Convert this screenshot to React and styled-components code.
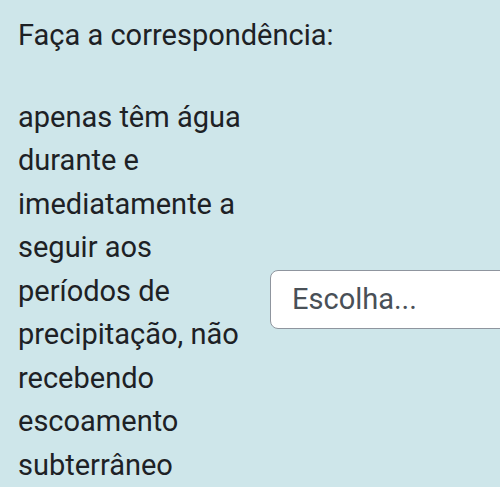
import React from "react";
import styled, { createGlobalStyle } from "styled-components";

const GlobalStyle = createGlobalStyle`
  html, body {
    margin: 0;
    padding: 0;
    background: #cee6ea;
  }
  body {
    font-family: Roboto, "Noto Sans", "Liberation Sans", sans-serif;
    color: #1d2125;
    overflow: hidden;
  }
`;

const Page = styled.div`
  padding: 14px 0 0 18px;
  width: 500px;
  height: 487px;
  box-sizing: border-box;
  overflow: hidden;
`;

const Prompt = styled.div`
  font-size: 29px;
  line-height: 43.5px;
  margin: 0 0 38px;
`;

const MatchRow = styled.div`
  display: grid;
  grid-template-columns: 252px 300px;
  align-items: center;
`;

const StemText = styled.div`
  font-size: 29px;
  line-height: 43.5px;
  padding-bottom: 16px;
`;

const ChoiceSelect = styled.div`
  box-sizing: border-box;
  height: 59px;
  width: 300px;
  display: flex;
  align-items: center;
  padding-left: 21px;
  background: #ffffff;
  border: 1px solid #8f959e;
  border-radius: 8px;
  font-size: 29px;
  color: #495057;
`;

export default function App() {
  return (
    <>
      <GlobalStyle />
      <Page>
        <Prompt>Faça a correspondência:</Prompt>
        <MatchRow>
          <StemText>
            apenas têm água durante e imediatamente a seguir aos períodos de
            precipitação, não recebendo escoamento subterrâneo
          </StemText>
          <ChoiceSelect>Escolha...</ChoiceSelect>
        </MatchRow>
      </Page>
    </>
  );
}
